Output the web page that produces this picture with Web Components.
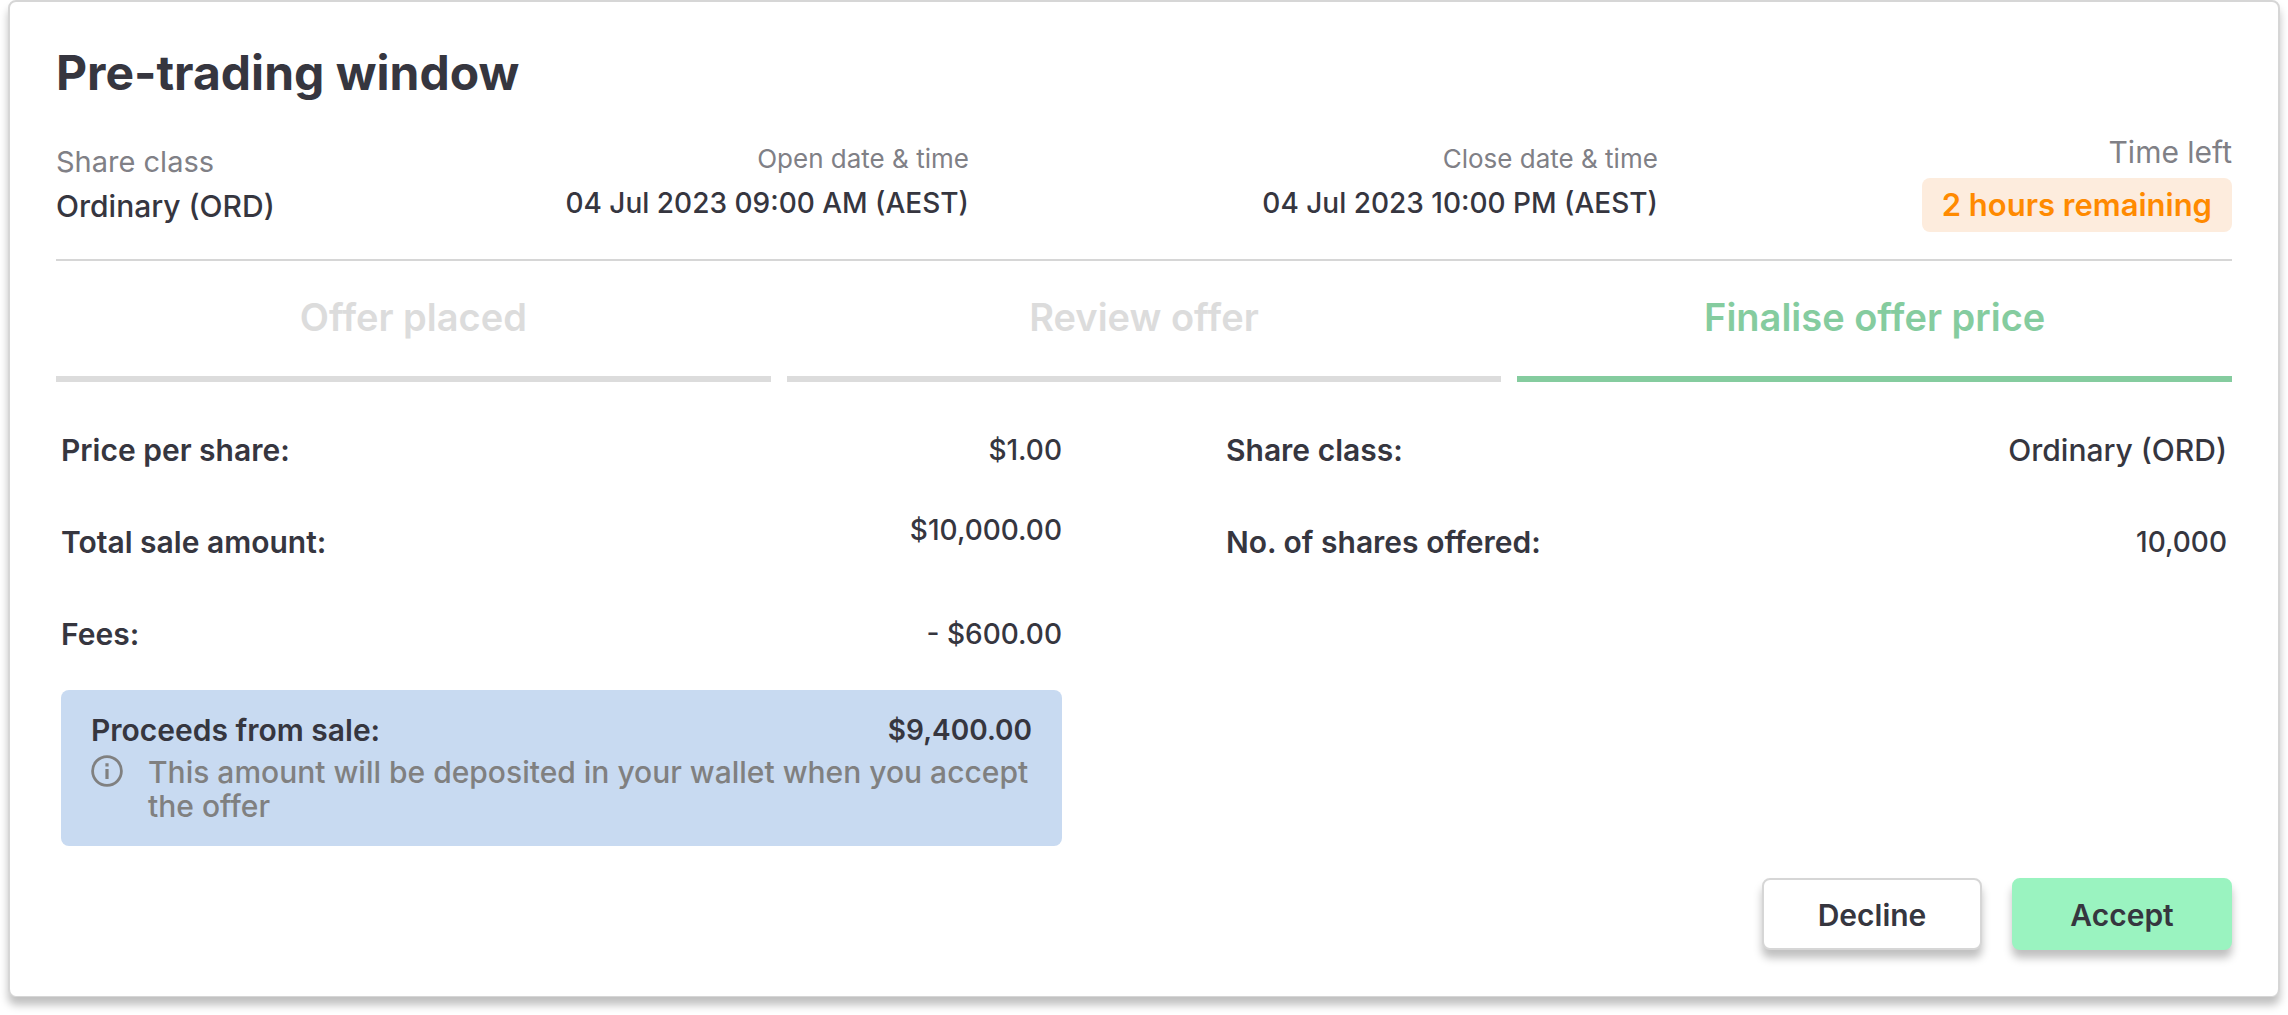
<!DOCTYPE html>
<html lang="en">
<head>
<meta charset="utf-8">
<meta name="viewport" content="width=device-width, initial-scale=1">
<title>Pre-trading window</title>
<style>
  body {
    margin: 0;
    padding: 0 8px 18px;
    background: #fff;
    color: #36363f;
    font: 500 30px/44px Inter, "Open Sans", sans-serif;
    --numeric: 28px;
    --muted: #808086;
    --line: #d6d6d6;
    --idle: #dcdcdc;
    --active: #85cc9f;
    --shadow: 0 8px 8px rgba(0, 0, 0, .25);
  }
</style>
</head>
<body>
<trade-card heading="Pre-trading window">
  <meta-list slot="meta">
    <meta-item label="Share class">Ordinary (ORD)</meta-item>
    <meta-item label="Open date &amp; time" kind="date">04 Jul 2023 09:00 AM (AEST)</meta-item>
    <meta-item label="Close date &amp; time" kind="date">04 Jul 2023 10:00 PM (AEST)</meta-item>
    <meta-item label="Time left" kind="badge">2 hours remaining</meta-item>
  </meta-list>
  <step-bar slot="steps">
    <step-item>Offer placed</step-item>
    <step-item>Review offer</step-item>
    <step-item active>Finalise offer price</step-item>
  </step-bar>
  <detail-column>
    <detail-row label="Price per share:" numeric>$1.00</detail-row>
    <detail-row label="Total sale amount:" numeric align="top">$10,000.00</detail-row>
    <detail-row label="Fees:" numeric>- $600.00</detail-row>
    <proceeds-box label="Proceeds from sale:" amount="$9,400.00">This amount will be deposited in your wallet when you accept the offer</proceeds-box>
  </detail-column>
  <detail-column>
    <detail-row label="Share class:">Ordinary (ORD)</detail-row>
    <detail-row label="No. of shares offered:" numeric>10,000</detail-row>
  </detail-column>
  <action-button slot="actions">Decline</action-button>
  <action-button slot="actions" primary>Accept</action-button>
</trade-card>

<script>
class Base extends HTMLElement {
  constructor() {
    super();
    this.attachShadow({ mode: "open" });
  }
  connectedCallback() {
    this.shadowRoot.innerHTML = `<style>*{box-sizing:border-box}:host{display:block;box-sizing:border-box}${this.css()}</style>${this.html()}`;
  }
  text(name) {
    return (this.getAttribute(name) || "").replace(/&/g, "&amp;").replace(/</g, "&lt;");
  }
}

customElements.define("trade-card", class extends Base {
  css() { return `
    section { border: 2px solid var(--line); border-bottom-width: 1px; border-radius: 8px; padding: 44px 46px 46px; background: #fff; box-shadow: var(--shadow); }
    h1 { margin: 0 0 34px; font-size: 48px; line-height: 54px; font-weight: 700; }
    .details { display: grid; grid-template-columns: 1fr 1fr; gap: 164px; padding: 22px 5px 0; }
    .actions { display: flex; justify-content: flex-end; gap: 30px; margin-top: 32px; }`; }
  html() { return `
    <section>
      <h1>${this.text("heading")}</h1>
      <slot name="meta"></slot>
      <slot name="steps"></slot>
      <div class="details"><slot></slot></div>
      <div class="actions"><slot name="actions"></slot></div>
    </section>`; }
});

customElements.define("meta-list", class extends Base {
  css() { return `
    :host { display: grid; grid-template-columns: 39fr 120fr 120fr 100fr; align-items: center; padding-bottom: 27px; border-bottom: 2px solid var(--line); }`; }
  html() { return `<slot></slot>`; }
});

customElements.define("meta-item", class extends Base {
  css() { return `
    :host { display: flex; flex-direction: column; padding-top: 2px; white-space: nowrap; }
    .label { color: var(--muted); font-weight: 400; font-size: 29px; }
    :host([kind]) { align-items: flex-end; padding-top: 0; }
    :host([kind=date]) { padding-bottom: 4px; }
    :host([kind=date]) .label { font-size: 26px; }
    :host([kind=date]) .value { font-size: var(--numeric); }
    :host([kind=badge]) { gap: 8px; }
    :host([kind=badge]) .label { font-size: 30px; line-height: 36px; }
    :host([kind=badge]) .value { padding: 0 20px; border-radius: 8px; font-size: 31px; line-height: 54px; font-weight: 600; color: #ff8a00; background: #fdecdd; }`; }
  html() { return `<span class="label">${this.text("label")}</span><span class="value"><slot></slot></span>`; }
});

customElements.define("step-bar", class extends Base {
  css() { return `:host { display: grid; grid-template-columns: repeat(3, 1fr); gap: 16px; }`; }
  html() { return `<slot></slot>`; }
});

customElements.define("step-item", class extends Base {
  css() { return `
    :host { padding: 34px 0 37px; border-bottom: 6px solid var(--idle); text-align: center; font-size: 38px; font-weight: 600; color: var(--idle); }
    :host([active]) { color: var(--active); border-color: var(--active); }`; }
  html() { return `<slot></slot>`; }
});

customElements.define("detail-column", class extends Base {
  css() { return ``; }
  html() { return `<slot></slot>`; }
});

customElements.define("detail-row", class extends Base {
  css() { return `
    :host { display: flex; justify-content: space-between; align-items: center; height: 92px; padding: 12px 0; }
    :host([numeric]) .value { font-size: var(--numeric); }
    :host([align=top]) .value { align-self: flex-start; }
    .label { font-weight: 600; }`; }
  html() { return `<span class="label">${this.text("label")}</span><span class="value"><slot></slot></span>`; }
});

customElements.define("proceeds-box", class extends Base {
  css() { return `
    :host { margin-top: 10px; padding: 23px 30px; border-radius: 8px; background: #c8daf1; line-height: 34px; }
    .total { display: flex; justify-content: space-between; font-weight: 600; }
    .amount { font-size: var(--numeric); }
    .note { display: flex; gap: 25px; margin-top: 8px; color: #808080; }
    p { margin: 0; }
    svg { flex: none; display: block; width: 32px; height: 32px; }`; }
  html() { return `
    <div class="total"><span>${this.text("label")}</span><span class="amount">${this.text("amount")}</span></div>
    <div class="note">
      <svg viewBox="0 0 32 32" aria-hidden="true"><circle cx="16" cy="16" r="14.4" fill="none" stroke="#808080" stroke-width="2.8"/><path d="M14.4 8.2h3.2v3.2h-3.2zM14.4 14h3.2v10h-3.2z" fill="#808080"/></svg>
      <p><slot></slot></p>
    </div>`; }
});

customElements.define("action-button", class extends Base {
  css() { return `
    button { display: block; width: 220px; height: 72px; margin: 0; padding: 2px 0 0; border: 2px solid var(--line); border-radius: 8px; background: #fff; color: inherit; font: inherit; font-weight: 600; box-shadow: var(--shadow); cursor: pointer; }
    :host([primary]) button { border-color: #9af3c0; background: #9af3c0; }`; }
  html() { return `<button type="button"><slot></slot></button>`; }
});
</script>
</body>
</html>
